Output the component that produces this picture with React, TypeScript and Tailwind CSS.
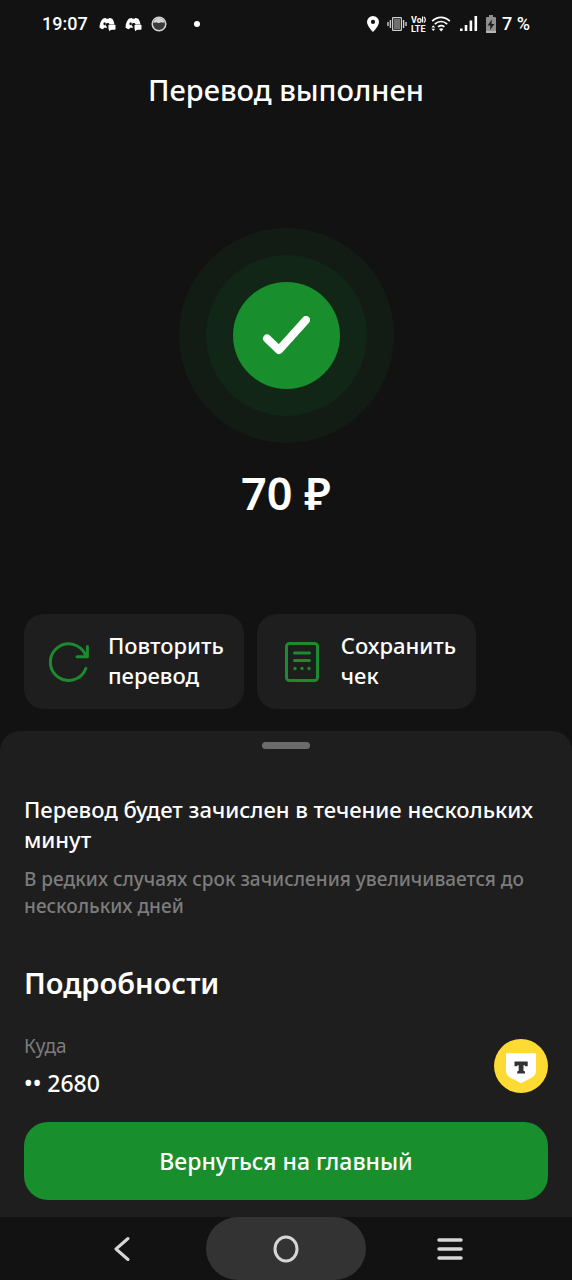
import React from 'react';

interface ActionCardProps {
    label: string;
    icon: React.ReactNode;
}

const DiscordIcon = () => (
    <svg viewBox="0 0 17 16" className="h-4 w-[17px]" fill="currentColor">
        <path d="M3.800 2.800c1-.8 2.200-1 3-.9l.6.8h2.200l.6-.8c.8-.1 2 .1 3 .9 1.300 1.700 2 3.600 2.200 5.700h-4.900c-.4-1.900-3.600-1.900-3.800.2-.1 1 .5 1.700 1.300 2v1.100c-1 .1-2 .1-3-.1l-.9 1.600C2.300 13 1.200 12.300.5 11.500.5 8.200 1.700 5 3.800 2.800Z" />
        <ellipse cx="5.600" cy="7.800" rx="1.200" ry="1.500" fill="#121212" />
        <rect x="9.500" y="8.800" width="7" height="5" rx="0.8" />
        <path d="M10 13h3.200L10 15.200Z" />
    </svg>
);

const FaceIcon = () => (
    <svg viewBox="0 0 16 16" className="size-4" fill="none" stroke="#d4d4d4">
        <circle cx="8" cy="8" r="6.800" fill="#3a3a3a" strokeWidth="1.500" />
        <path d="M2.500 6.500C3 3.500 5.500 2 8 2s5 1.500 5.500 4.500C12 7 11 6 10 6.200 9 7.200 7 7.200 6 6.400 4.800 6.200 4 7.200 2.500 6.500Z" fill="#d4d4d4" stroke="none" />
    </svg>
);

const PinIcon = () => (
    <svg viewBox="0 0 12 16" className="h-4 w-3" fill="currentColor">
        <path fillRule="evenodd" d="M6 0a6 6 0 0 0-6 6c0 4 6 10 6 10s6-6 6-10a6 6 0 0 0-6-6Zm0 3.800a2.100 2.100 0 1 1 0 4.200 2.100 2.100 0 0 1 0-4.200Z" />
    </svg>
);

const VibrateIcon = () => (
    <svg viewBox="0 0 20 16" className="h-4 w-5" fill="none" stroke="#cfcfcf" strokeWidth="1.200">
        <rect x="5.600" y="1.600" width="8.800" height="12.800" rx="0.6" />
        <rect x="7" y="3" width="6" height="10" fill="#707070" stroke="none" />
        <path d="M3.400 4v8M16.600 4v8M1 6v4M19 6v4" strokeWidth="1.400" />
    </svg>
);

const VolteIcon = () => (
    <svg viewBox="0 0 16 16" className="size-4" fill="currentColor" fontFamily="Roboto, sans-serif" fontWeight="700">
        <text x="0" y="7" fontSize="9">Vo</text>
        <text x="0" y="15.500" fontSize="9">LTE</text>
        <path d="M11.600.6v6M13 1c1.800 1.400 1.800 4.200 0 5.600" fill="none" stroke="currentColor" strokeWidth="1.200" />
    </svg>
);

const WifiIcon = () => (
    <svg viewBox="0 0 20 16" className="h-4 w-5" fill="none" stroke="currentColor" strokeWidth="1.700">
        <path d="M1.200 5.200c5-5 12.600-5 17.600 0M3.800 8.200c3.700-3.600 8.700-3.600 12.400 0M7 10.800c2-1.600 4.400-1.600 6.400 0" />
        <path d="m8 13 2.200 2.500 2.200-2.500c-1.300-1-3.100-1-4.400 0Z" fill="currentColor" stroke="none" />
        <path d="m.4 11.400 1.900-2.200 1.900 2.200ZM.4 12.800l1.900 2.200 1.900-2.200Z" fill="currentColor" stroke="none" />
    </svg>
);

const SignalIcon = () => (
    <svg viewBox="0 0 18 16" className="h-4 w-[18px]" fill="currentColor">
        <rect x="0" y="12.500" width="2.600" height="2.500" />
        <rect x="4.700" y="9" width="2.600" height="6" />
        <rect x="9.600" y="4.500" width="2.600" height="10.500" />
        <rect x="14.500" y="0" width="2.600" height="15" />
    </svg>
);

const BatteryIcon = () => (
    <svg viewBox="0 0 10 18" className="h-[18px] w-2.5">
        <path d="M3 0h4v2h2a1 1 0 0 1 1 1v14a1 1 0 0 1-1 1H1a1 1 0 0 1-1-1V3a1 1 0 0 1 1-1h2Z" fill="#8f8f8f" />
        <path d="M0 16h10v1a1 1 0 0 1-1 1H1a1 1 0 0 1-1-1Z" fill="#b8b8b8" />
        <path d="M6 4.500 1.600 10.600h2.800L4 15l4.400-6H5.500Z" fill="#1c1c1c" />
    </svg>
);

const RepeatIcon = () => (
    <svg viewBox="0 0 40 40" className="size-10" fill="none" stroke="#1d8a2f" strokeWidth="3" strokeLinecap="round" strokeLinejoin="round">
        <path d="M36.500 13A18.300 18.300 0 1 0 36.800 26.500" />
        <path d="M38.400 4.500v10.200H28" />
    </svg>
);

const ReceiptIcon = () => (
    <svg viewBox="0 0 40 40" className="size-10" fill="none" stroke="#1d8a2f" strokeWidth="3" strokeLinecap="round">
        <rect x="4.500" y="1.500" width="31" height="37" rx="3" />
        <path d="M12.500 11h15M12.500 18.500h15" />
        <path d="M13 26.500h.01M20 26.500h.01M27 26.500h.01" strokeWidth="3.400" />
    </svg>
);

const BankLogo = () => (
    <svg viewBox="0 0 54 54" className="size-[54px]" role="img">
        <circle cx="27" cy="27" r="27" fill="#fddb32" />
        <path d="M12 14.300h30v17.200c0 3.500-1.500 5.500-4.500 7.200L27 44.300l-10.500-5.600c-3-1.700-4.500-3.700-4.500-7.200Z" fill="#fff" />
        <path d="M20.500 22.500h13.200v4.800h-2.400l-.8-1h-1v5.500l1.500.8v2h-7.800v-2l1.500-.8v-5.500h-1l-.8 1h-2.400Z" fill="#333" />
    </svg>
);

const ActionCard: React.FC<ActionCardProps> = ({ label, icon }) => (
    <button className="flex min-h-[95px] items-center gap-[19px] rounded-[20px] bg-[#1e1e1e] pr-5 pl-[25px] text-left text-[22px] leading-[30px] font-medium">
        {icon}
        <span className="pb-1 whitespace-pre-line">{label}</span>
    </button>
);

const StatusBar = () => (
    <div className="flex h-12 items-center justify-between px-[42px] font-[Roboto,sans-serif] text-lg font-medium">
        <div className="flex items-center gap-[9px]">
            <span>19:07</span>
            <span className="ml-[2px]"><DiscordIcon /></span>
            <DiscordIcon />
            <FaceIcon />
            <span className="ml-[18px] size-1.5 rounded-full bg-white" />
        </div>
        <div className="flex items-center">
            <PinIcon />
            <span className="ml-2"><VibrateIcon /></span>
            <span className="ml-1"><VolteIcon /></span>
            <span className="ml-1"><WifiIcon /></span>
            <span className="ml-[9px]"><SignalIcon /></span>
            <span className="ml-2"><BatteryIcon /></span>
            <span className="ml-1.5">7 %</span>
        </div>
    </div>
);

const App: React.FC = () => {
    return (
        <div className="flex min-h-screen flex-col bg-[#121212] font-['Noto_Sans','Open_Sans',sans-serif] text-white">
            <StatusBar />

            {/* Result */}
            <main className="flex flex-1 flex-col">
                <h1 className="pt-5 text-center text-[29px] leading-11 font-medium">Перевод выполнен</h1>

                <div className="mx-auto mt-[116px] flex size-[215px] items-center justify-center rounded-full bg-[#121c14]">
                    <div className="flex size-[161px] items-center justify-center rounded-full bg-[#112616]">
                        <div className="flex size-[107px] items-center justify-center rounded-full bg-[#188f2c]">
                            <svg viewBox="0 0 48 40" className="h-10 w-12" fill="none" stroke="#fff" strokeWidth="8" strokeLinecap="round" strokeLinejoin="round">
                                <path d="M5 22.500 17 34 44 4" />
                            </svg>
                        </div>
                    </div>
                </div>

                <p className="mt-[22px] text-center text-[45px] leading-14 font-semibold">70 ₽</p>

                <div className="mt-[93px] flex gap-[13px] px-6">
                    <ActionCard label={'Повторить\nперевод'} icon={<RepeatIcon />} />
                    <ActionCard label={'Сохранить\nчек'} icon={<ReceiptIcon />} />
                </div>
            </main>

            {/* Bottom sheet */}
            <section className="mt-[22px] rounded-t-[20px] bg-[#1e1e1e] px-6 pt-[11px] pb-[17px]">
                <div className="mx-auto h-[7px] w-12 rounded-full bg-[#6b6b6b]" />

                <p className="mt-[45px] text-[22px] leading-[30px] font-medium">
                    Перевод будет зачислен в течение нескольких минут
                </p>
                <p className="mt-3 text-[19px] leading-[27px] font-medium text-[#7c7c7c]">
                    В редких случаях срок зачисления увеличивается до нескольких дней
                </p>

                <h2 className="mt-[43px] text-[29px] leading-10 font-semibold">Подробности</h2>

                <div className="mt-[30px] flex items-center justify-between">
                    <div>
                        <p className="text-[19px] leading-[27px] text-[#7c7c7c]">Куда</p>
                        <p className="mt-2 text-[23px] leading-[30px] font-medium">•• 2680</p>
                    </div>
                    <BankLogo />
                </div>

                <button className="mt-6 h-[78px] w-full rounded-3xl bg-[#188f2c] text-[23px] leading-[30px] font-medium">
                    Вернуться на главный
                </button>
            </section>

            {/* System navigation */}
            <nav className="flex h-[63px] items-center justify-center gap-1 text-[#d6d6d6]">
                <button aria-label="Назад" className="flex h-full w-40 items-center justify-center">
                    <svg viewBox="0 0 16 26" className="h-[26px] w-4" fill="none" stroke="currentColor" strokeWidth="3" strokeLinecap="round" strokeLinejoin="round">
                        <path d="M14 2.500 2 13l12 10.500" />
                    </svg>
                </button>
                <button aria-label="Домой" className="flex h-full w-40 items-center justify-center rounded-full bg-[#333]">
                    <svg viewBox="0 0 26 28" className="h-7 w-[26px]" fill="none" stroke="currentColor" strokeWidth="3">
                        <ellipse cx="13" cy="14" rx="11" ry="12" />
                    </svg>
                </button>
                <button aria-label="Меню" className="flex h-full w-40 items-center justify-center">
                    <svg viewBox="0 0 26 22" className="h-[22px] w-[26px]" fill="none" stroke="currentColor" strokeWidth="3.500" strokeLinecap="round">
                        <path d="M2 2h22M2 11h22M2 20h22" />
                    </svg>
                </button>
            </nav>
        </div>
    );
};

export default App;
